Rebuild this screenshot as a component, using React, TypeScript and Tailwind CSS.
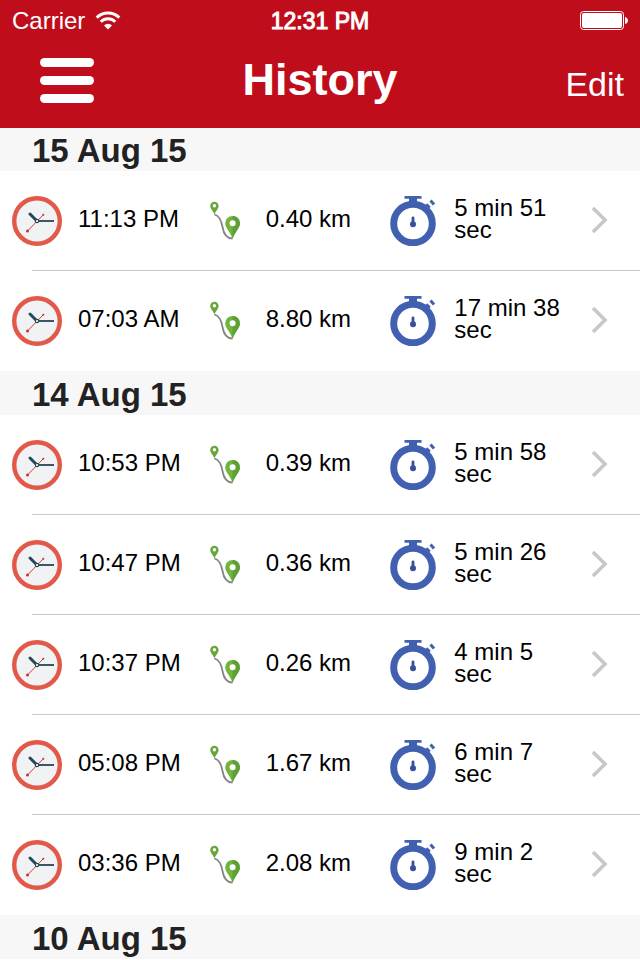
type Run = {
  time: string;
  distance: string;
  duration: string;
};

type Day = {
  date: string;
  runs: Run[];
};

const days: Day[] = [
  {
    date: '15 Aug 15',
    runs: [
      { time: '11:13 PM', distance: '0.40 km', duration: '5 min 51 sec' },
      { time: '07:03 AM', distance: '8.80 km', duration: '17 min 38 sec' },
    ],
  },
  {
    date: '14 Aug 15',
    runs: [
      { time: '10:53 PM', distance: '0.39 km', duration: '5 min 58 sec' },
      { time: '10:47 PM', distance: '0.36 km', duration: '5 min 26 sec' },
      { time: '10:37 PM', distance: '0.26 km', duration: '4 min 5 sec' },
      { time: '05:08 PM', distance: '1.67 km', duration: '6 min 7 sec' },
      { time: '03:36 PM', distance: '2.08 km', duration: '9 min 2 sec' },
    ],
  },
  { date: '10 Aug 15', runs: [] },
];

function WifiIcon() {
  return (
    <svg width="26" height="20" viewBox="0 0 26 20" fill="none" aria-hidden="true">
      <path d="M1.7 6.6a16 16 0 0 1 22.6 0" stroke="#fff" strokeWidth="3" />
      <path d="M5.7 10.8a10.3 10.3 0 0 1 14.6 0" stroke="#fff" strokeWidth="2.8" />
      <path d="M9 14.4a5.6 5.6 0 0 1 8 0l-4 4.200z" fill="#fff" />
    </svg>
  );
}

function BatteryIcon() {
  return (
    <svg width="49" height="20" viewBox="0 0 49 20" aria-hidden="true">
      <rect x="1.5" y="0.5" width="43" height="18" rx="3" fill="none" stroke="#fff" />
      <rect x="3" y="2" width="40" height="15" rx="2" fill="#fff" />
      <path d="M46 6c4 1 4 6 0 7z" fill="#fff" />
    </svg>
  );
}

function ClockIcon() {
  return (
    <svg width="50" height="50" viewBox="0 0 50 50" fill="none" className="shrink-0" aria-hidden="true">
      <circle cx="25" cy="25" r="22.8" fill="#f0f2f4" stroke="#e2594a" strokeWidth="4.4" />
      <path d="M25 25 18 18" stroke="#264756" strokeWidth="3" strokeLinecap="round" />
      <path d="M25 25h17" stroke="#264756" strokeWidth="1.8" />
      <path d="M31.5 18.5 15.5 35" stroke="#cf3e3a" strokeWidth="1" />
      <circle cx="31.3" cy="18.7" r="1" fill="#c8322f" />
      <circle cx="15.5" cy="35" r="1.5" fill="#c8322f" />
      <circle cx="25" cy="25" r="1.7" fill="#fff" stroke="#264756" strokeWidth="1.2" />
    </svg>
  );
}

function RouteIcon() {
  return (
    <svg width="30" height="50" viewBox="0 0 30 50" fill="none" className="shrink-0" aria-hidden="true">
      <path d="M4.5 18.5C10 20 11.500 25 12.5 31s3.500 11.500 10 11.500" stroke="#858585" strokeWidth="1.8" />
      <path d="M4.5 19C3.5 15 0.2 13 0.2 10a4.2 4.2 0 0 1 8.4 0c0 3-3.1 5-4.1 9z" fill="#68a63c" />
      <circle cx="4.4" cy="9.8" r="1.7" fill="#fff" />
      <path d="M22.6 43C20.5 36 15.2 32 15.2 27.3a7.4 7.4 0 0 1 14.8 0C30 32 24.7 36 22.6 43z" fill="#70b43c" />
      <path d="M22.6 43V19.9a7.4 7.4 0 0 1 7.4 7.4C30 32 24.7 36 22.6 43z" fill="#5f9f38" />
      <circle cx="22.6" cy="27.3" r="3" fill="#fff" />
    </svg>
  );
}

function StopwatchIcon() {
  return (
    <svg width="48" height="50" viewBox="0 0 48 50" fill="none" className="shrink-0" aria-hidden="true">
      <circle cx="23" cy="27.5" r="19.3" stroke="#4160b0" strokeWidth="7" />
      <path d="M14.500 0h17v2.800h-4.500V7h-8V2.800h-4.500z" fill="#4160b0" />
      <path d="m36 12 3-3" stroke="#4160b0" strokeWidth="5" />
      <path d="m40.5 4.5 3.5 4" stroke="#4160b0" strokeWidth="3" />
      <path d="M23 22v6" stroke="#36509c" strokeWidth="2.8" strokeLinecap="round" />
      <circle cx="23" cy="28.3" r="3" fill="#36509c" />
    </svg>
  );
}

function Chevron() {
  return (
    <svg width="18" height="28" viewBox="0 0 18 28" fill="none" aria-hidden="true">
      <path d="m3 1 12 12-12 12" stroke="#c7c7cc" strokeWidth="3.6" />
    </svg>
  );
}

function RunRow({ run }: { run: Run }) {
  return (
    <li className="group">
      <a
        href="#run"
        className="grid h-[99px] grid-cols-[198fr_181fr_200fr_auto] items-center pr-8 pl-3 text-2xl text-black"
      >
        <span className="flex items-center gap-4">
          <ClockIcon />
          <span className="pb-1 whitespace-nowrap">{run.time}</span>
        </span>
        <span className="flex items-center gap-[26px]">
          <RouteIcon />
          <span className="pb-1 whitespace-nowrap">{run.distance}</span>
        </span>
        <span className="flex items-center gap-4">
          <StopwatchIcon />
          <span className="max-w-[116px] pb-1 leading-[22px]">{run.duration}</span>
        </span>
        <Chevron />
      </a>
      <div className="ml-8 h-px bg-[#c8c7cc] group-last:bg-transparent" />
    </li>
  );
}

export default function App() {
  return (
    <div className="bg-white font-['Liberation_Sans',Arial,sans-serif]">
      <header className="relative z-10 h-32 bg-[#bf0d1c] text-white">
        <div className="grid h-10 grid-cols-3 items-center px-3 pt-[2px] text-2xl">
          <div className="flex items-center gap-[10px]">
            <span>Carrier</span>
            <WifiIcon />
          </div>
          <span className="text-center text-[23px] [-webkit-text-stroke:1px]">12:31 PM</span>
          <div className="flex justify-end">
            <BatteryIcon />
          </div>
        </div>
        <div className="grid h-20 grid-cols-[1fr_auto_1fr] items-center">
          <button
            type="button"
            aria-label="Menu"
            className="ml-10 flex w-[54px] cursor-pointer flex-col gap-[9px]"
          >
            <span className="h-[9px] rounded-full bg-white" />
            <span className="h-[9px] rounded-full bg-white" />
            <span className="h-[9px] rounded-full bg-white" />
          </button>
          <h1 className="text-[45px] font-bold">History</h1>
          <button type="button" className="mr-4 cursor-pointer justify-self-end pt-2 text-[34px]">
            Edit
          </button>
        </div>
      </header>

      {/* first section tucks under the header by one pixel */}
      <main className="-mt-px">
        {days.map((day) => (
          <section key={day.date}>
            <h2 className="h-11 bg-[#f7f7f7] pt-[2px] pl-8 text-[33px] leading-[44px] font-bold text-[#222]">
              {day.date}
            </h2>
            <ul>
              {day.runs.map((run) => (
                <RunRow key={run.time} run={run} />
              ))}
            </ul>
          </section>
        ))}
      </main>
    </div>
  );
}
